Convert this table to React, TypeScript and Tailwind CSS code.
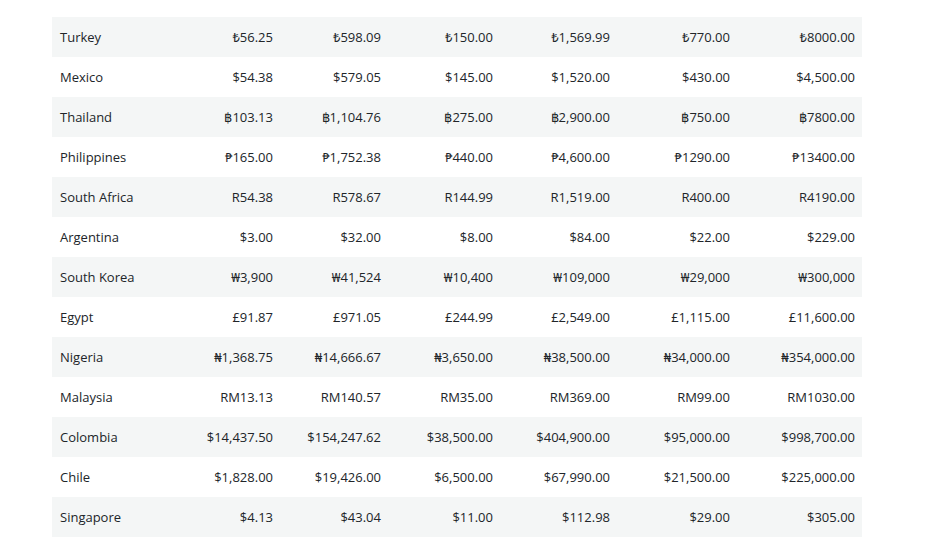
import React from 'react';

// Preise je Land (sechs Stufen)
const rows: [string, string[]][] = [
  ['Turkey', ['₺56.25', '₺598.09', '₺150.00', '₺1,569.99', '₺770.00', '₺8000.00']],
  ['Mexico', ['$54.38', '$579.05', '$145.00', '$1,520.00', '$430.00', '$4,500.00']],
  ['Thailand', ['฿103.13', '฿1,104.76', '฿275.00', '฿2,900.00', '฿750.00', '฿7800.00']],
  ['Philippines', ['₱165.00', '₱1,752.38', '₱440.00', '₱4,600.00', '₱1290.00', '₱13400.00']],
  ['South Africa', ['R54.38', 'R578.67', 'R144.99', 'R1,519.00', 'R400.00', 'R4190.00']],
  ['Argentina', ['$3.00', '$32.00', '$8.00', '$84.00', '$22.00', '$229.00']],
  ['South Korea', ['₩3,900', '₩41,524', '₩10,400', '₩109,000', '₩29,000', '₩300,000']],
  ['Egypt', ['£91.87', '£971.05', '£244.99', '£2,549.00', '£1,115.00', '£11,600.00']],
  ['Nigeria', ['₦1,368.75', '₦14,666.67', '₦3,650.00', '₦38,500.00', '₦34,000.00', '₦354,000.00']],
  ['Malaysia', ['RM13.13', 'RM140.57', 'RM35.00', 'RM369.00', 'RM99.00', 'RM1030.00']],
  ['Colombia', ['$14,437.50', '$154,247.62', '$38,500.00', '$404,900.00', '$95,000.00', '$998,700.00']],
  ['Chile', ['$1,828.00', '$19,426.00', '$6,500.00', '$67,990.00', '$21,500.00', '$225,000.00']],
  ['Singapore', ['$4.13', '$43.04', '$11.00', '$112.98', '$29.00', '$305.00']],
];

const colWidths = ['w-[118px]', 'w-[110px]', 'w-[108px]', 'w-[112px]', 'w-[117px]', 'w-[120px]', 'w-[125px]'];

export default function App() {
  return (
    <div className="min-h-[549px] bg-white pt-[17px] pl-[52px] font-['Open_Sans','Noto_Sans',sans-serif] text-[13px] text-[#212529]">
      <table className="w-[810px] table-fixed border-collapse">
        <colgroup>
          {colWidths.map((w, i) => (
            <col key={i} className={w} />
          ))}
        </colgroup>
        <tbody>
          {rows.map(([country, prices], i) => (
            <tr key={country} className={i % 2 === 0 ? 'h-10 bg-[#f4f6f6]' : 'h-10 bg-white'}>
              <td className="px-2 pt-[2px] text-left">{country}</td>
              {prices.map((p, j) => (
                <td key={j} className="px-[7px] pt-[2px] text-right">
                  {p}
                </td>
              ))}
            </tr>
          ))}
        </tbody>
      </table>
    </div>
  );
}
